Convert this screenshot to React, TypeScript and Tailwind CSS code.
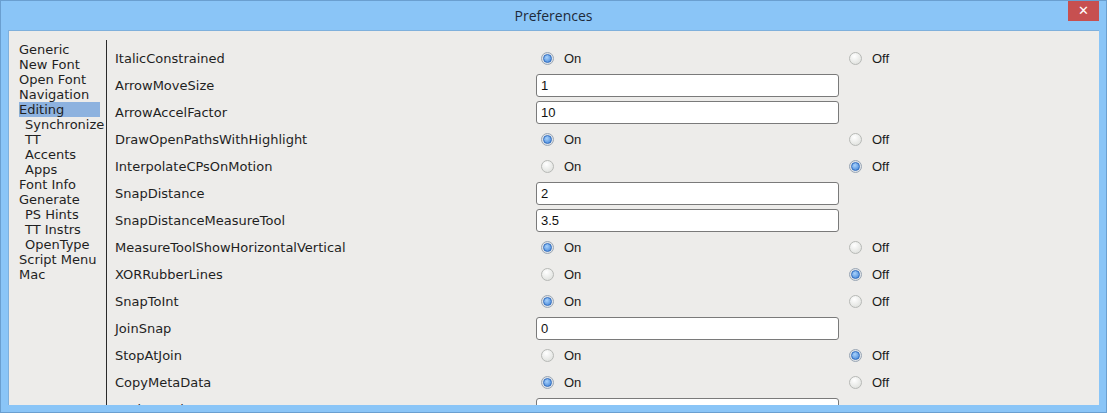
import React from "react";

type Row =
  | { name: string; kind: "bool"; on: boolean }
  | { name: string; kind: "text"; value: string };

const ROWS: Row[] = [
  { name: "ItalicConstrained", kind: "bool", on: true },
  { name: "ArrowMoveSize", kind: "text", value: "1" },
  { name: "ArrowAccelFactor", kind: "text", value: "10" },
  { name: "DrawOpenPathsWithHighlight", kind: "bool", on: true },
  { name: "InterpolateCPsOnMotion", kind: "bool", on: false },
  { name: "SnapDistance", kind: "text", value: "2" },
  { name: "SnapDistanceMeasureTool", kind: "text", value: "3.5" },
  { name: "MeasureToolShowHorizontalVertical", kind: "bool", on: true },
  { name: "XORRubberLines", kind: "bool", on: false },
  { name: "SnapToInt", kind: "bool", on: true },
  { name: "JoinSnap", kind: "text", value: "0" },
  { name: "StopAtJoin", kind: "bool", on: false },
  { name: "CopyMetaData", kind: "bool", on: true },
  { name: "UndoDepth", kind: "text", value: "" },
];

const NAV: { label: string; sub?: boolean; active?: boolean }[] = [
  { label: "Generic" },
  { label: "New Font" },
  { label: "Open Font" },
  { label: "Navigation" },
  { label: "Editing", active: true },
  { label: "Synchronize", sub: true },
  { label: "TT", sub: true },
  { label: "Accents", sub: true },
  { label: "Apps", sub: true },
  { label: "Font Info" },
  { label: "Generate" },
  { label: "PS Hints", sub: true },
  { label: "TT Instrs", sub: true },
  { label: "OpenType", sub: true },
  { label: "Script Menu" },
  { label: "Mac" },
];

function Radio({ checked, label }: { checked: boolean; label: string }) {
  return (
    <div className="flex items-center gap-[10px] pl-[5px]">
      {checked ? (
        <span className="w-[13px] h-[13px] rounded-full border border-[#9aa6b4] bg-[#dfe3e8] flex items-center justify-center">
          <span className="w-[9px] h-[9px] rounded-full bg-[radial-gradient(circle_at_40%_35%,#a9d2fb,#3b7fd6)] border border-[#2f6cbf]" />
        </span>
      ) : (
        <span className="w-[13px] h-[13px] rounded-full border border-[#b7b9b6] bg-[radial-gradient(circle_at_40%_30%,#ffffff,#d9dbd7)]" />
      )}
      <span className="text-[13px] text-[#1b1b1b] font-['Liberation_Sans',Arial,sans-serif]">{label}</span>
    </div>
  );
}

export default function App() {
  return (
    <div className="w-[1107px] h-[413px] bg-[#8ac5f7] border border-[#6a9fd0] flex flex-col overflow-hidden">
      {/* title bar */}
      <div className="relative h-[29px] shrink-0 flex items-center justify-center">
        <span className="text-[14px] text-[#1e2a3a] font-['Open_Sans',sans-serif]">Preferences</span>
        <div className="absolute right-[7px] top-0 w-[31px] h-[20px] bg-[#c75050] flex items-center justify-center text-white text-[13px] font-bold font-['DejaVu_Sans',sans-serif]">
          ✕
        </div>
      </div>

      {/* body */}
      <div className="mx-[7px] mb-[7px] flex-1 bg-[#edecea] border-t border-l border-[#7fb0dc] flex overflow-hidden font-['DejaVu_Sans',sans-serif] text-[13px] text-[#1f1f1f]">
        {/* nav list */}
        <div className="w-[97px] shrink-0 pl-[10px] pt-[11px]">
          {NAV.map((n) => (
            <div
              key={n.label}
              className={`h-[15px] leading-[15px] whitespace-nowrap ${n.sub ? "pl-[6px]" : ""} ${
                n.active ? "bg-[#8db2df] w-[81px]" : ""
              }`}
            >
              {n.label}
            </div>
          ))}
        </div>

        {/* divider */}
        <div className="mt-[9px] w-px bg-[#2a2a2a] shrink-0" />

        {/* settings */}
        <div className="flex-1 pl-[8px] pt-[14px]">
          {ROWS.map((r) => (
            <div key={r.name} className="h-[27px] flex items-center">
              <div className="w-[421px] shrink-0 whitespace-nowrap">{r.name}</div>
              {r.kind === "bool" ? (
                <>
                  <div className="w-[308px] shrink-0">
                    <Radio checked={r.on} label="On" />
                  </div>
                  <Radio checked={!r.on} label="Off" />
                </>
              ) : (
                <div className="w-[303px] h-[23px] rounded-[3px] border border-[#7a7a7a] bg-white flex items-center pl-[4px] text-[13px] text-[#111] font-['Liberation_Sans',Arial,sans-serif]">
                  {r.value}
                </div>
              )}
            </div>
          ))}
        </div>
      </div>
    </div>
  );
}
